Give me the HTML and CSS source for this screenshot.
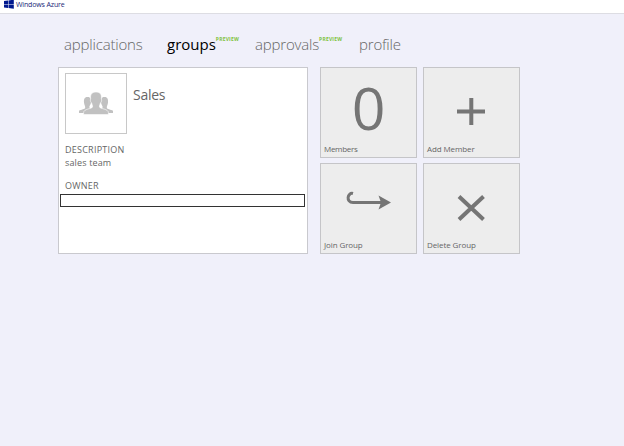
FILE: index.html
```html
<!DOCTYPE html>
<html lang="en">
<head>
<meta charset="utf-8">
<title>Windows Azure</title>
<link rel="stylesheet" href="styles.css">
</head>
<body>
<header class="topbar">
  <svg class="logo" width="10" height="9" viewBox="0 0 10 9"><path d="M0 1.1 4 .5V4H0ZM4.5.4 9.8-.3V4H4.5ZM0 4.5H4V8L0 7.4ZM4.5 4.5H9.8V8.8L4.5 8.1Z"/></svg>
  <span class="brand">Windows Azure</span>
</header>
<nav class="tabs">
  <a class="tab applications">applications</a>
  <a class="tab groups active">groups<sup class="preview">PREVIEW</sup></a>
  <a class="tab approvals">approvals<sup class="preview">PREVIEW</sup></a>
  <a class="tab profile">profile</a>
</nav>
<main class="content">
  <section class="card">
    <div class="identity">
      <div class="avatar">
        <svg width="34" height="24" viewBox="0 0 34 24">
          <path d="M8.5 5C11.9 5 12.4 7.5 12 10.5 11.6 13 10.4 13.5 10.4 15L11 17.6 5 21H0V18.8C2 17.4 6.2 17.5 6.2 15.5 6.2 13.8 5.2 13 5 10.5 4.7 7.5 5.2 5 8.5 5ZM25.5 5C22.1 5 21.6 7.5 22 10.5 22.4 13 23.6 13.5 23.6 15L23 17.6 29 21H34V18.8C32 17.4 27.8 17.5 27.8 15.5 27.8 13.8 28.8 13 29 10.5 29.3 7.5 28.8 5 25.5 5Z"/>
          <path class="front" d="M17 0C21.9 0 22.8 3 22.3 7 23.2 8 22.4 10.3 21.4 11 21 12.6 20.4 13.2 20.4 15 21.2 16.9 29.4 16.8 29.4 20.6V22.6H4.6V20.6C4.6 16.8 12.8 16.9 13.6 15 13.6 13.2 13 12.6 12.6 11 11.6 10.3 10.8 8 11.7 7 11.2 3 12.1 0 17 0Z"/>
        </svg>
      </div>
      <h1 class="name">Sales</h1>
    </div>
    <div class="label description">DESCRIPTION</div>
    <div class="value">sales team</div>
    <div class="label owner">OWNER</div>
    <div class="field"></div>
  </section>
  <section class="tiles">
    <div class="tile"><div class="figure count">0</div><span class="caption members">Members</span></div>
    <div class="tile"><div class="figure"><svg width="95" height="89"><path d="M33 43.5H61M47.3 30V57"/></svg></div><span class="caption">Add Member</span></div>
    <div class="tile"><div class="figure"><svg width="95" height="89"><path class="hook" d="M32 29.5C26.5 28 24.5 38.5 32 38.5H61"/><path class="head" d="M57.5 31.5 70 38.5 57.5 45.5 60 38.5Z"/></svg></div><span class="caption join">Join Group</span></div>
    <div class="tile"><div class="figure"><svg width="95" height="89"><path d="M35 32.5 59.5 55.5M59.5 32.5 35 55.5"/></svg></div><span class="caption">Delete Group</span></div>
  </section>
</main>
</body>
</html>
```

FILE: styles.css
```css
* { box-sizing: border-box; }
body { margin: 0; height: 446px; overflow: hidden; background: #f0f0fa; color: #666; font-family: "Open Sans", "Noto Sans", sans-serif; }
.topbar { height: 14px; background: #fff; border-bottom: 1px solid #dddde3; display: flex; align-items: flex-start; padding-left: 4px; }
.logo { fill: #00188f; flex: none; }
.brand { margin-left: 2px; font-size: 7px; letter-spacing: -.14px; line-height: 9px; color: #202878; white-space: nowrap; }
.tabs { display: flex; height: 53px; padding: 20px 0 0 64px; }
.tab { display: flex; flex: none; font-size: 15px; font-weight: 300; letter-spacing: -.18px; line-height: 20px; color: #666; white-space: nowrap; }
.applications { width: 103px; }
.groups { width: 88px; }
.approvals { width: 104px; }
.active { color: #000; font-weight: 400; letter-spacing: 0; }
.preview { font-size: 5px; line-height: 10px; font-weight: 700; letter-spacing: .2px; color: #7fc241; }
.content { display: flex; gap: 12px; padding-left: 58px; }
.card { width: 250px; height: 187px; background: #fff; border: 1px solid #c9c9ce; padding: 5px 3px 0 1px; }
.identity { display: flex; padding-left: 5px; }
.avatar { width: 62px; height: 61px; border: 1px solid #c8c8c8; display: flex; justify-content: center; padding-top: 18px; }
.avatar svg { fill: #c1c1c1; }
.front { stroke: #fff; stroke-width: .6; }
.name { margin: 12px 0 0 6px; font-size: 14px; letter-spacing: -.25px; line-height: 20px; font-weight: 400; }
.label, .value { padding-left: 5px; font-size: 9px; line-height: 12px; letter-spacing: .15px; }
.label { letter-spacing: .24px; }
.description { margin-top: 10px; }
.value { padding-top: 1px; height: 12px; }
.owner { margin-top: 12px; }
.field { margin-top: 2px; width: 245px; height: 13px; border: 1px solid #333; }
.tiles { display: grid; grid-template-columns: 97px 97px; grid-auto-rows: 91px; gap: 5px 6px; }
.tile { border: 1px solid #c5c5c8; background: #ededed; display: grid; }
.figure, .caption { grid-area: 1 / 1; }
.figure svg { display: block; fill: none; stroke: #757575; stroke-width: 4; }
.figure .hook { stroke-width: 3; }
.figure .head { fill: #757575; stroke: none; }
.count { text-align: center; font-size: 59px; line-height: 78px; color: #757575; }
.caption { align-self: end; padding: 0 0 2px 3px; font-size: 8px; letter-spacing: -.1px; line-height: 12px; white-space: nowrap; }
.members { letter-spacing: -.3px; }
```
